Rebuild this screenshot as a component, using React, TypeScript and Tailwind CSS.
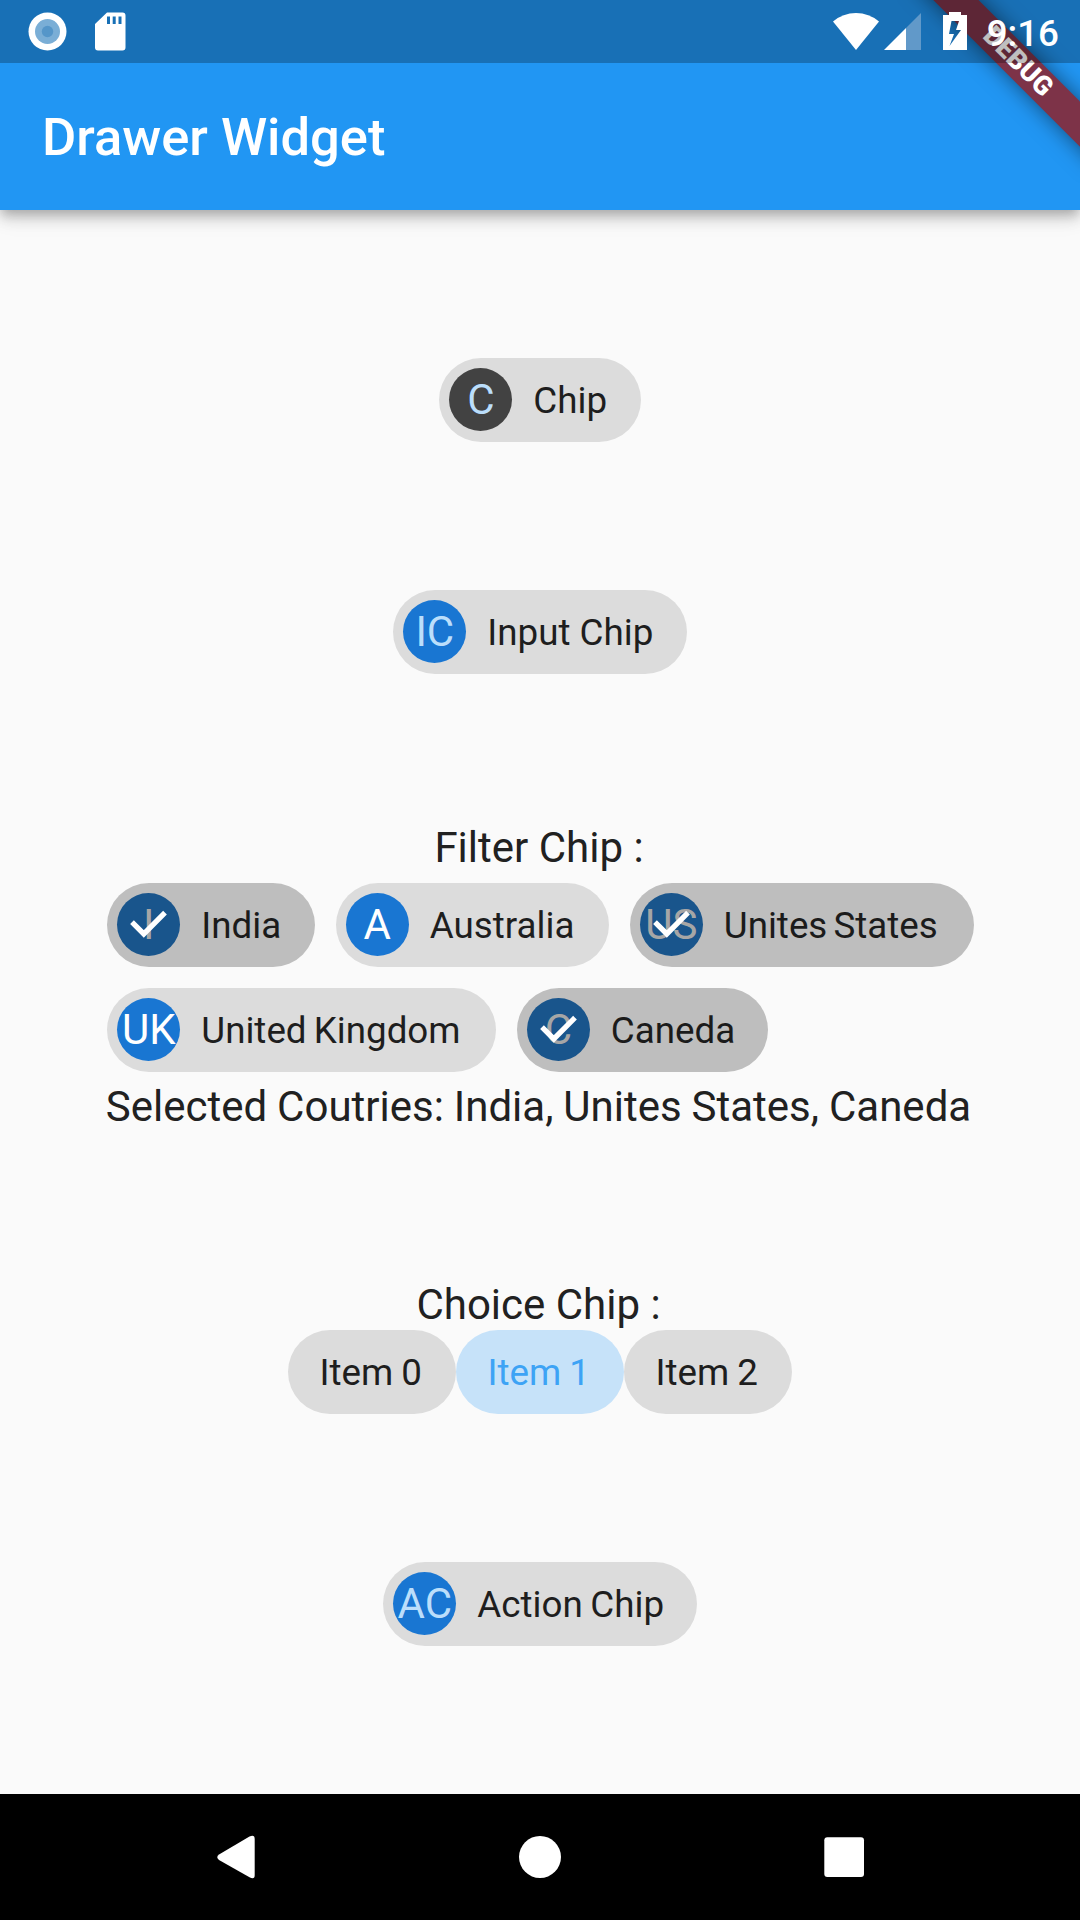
import type { ReactNode } from "react";

function Check() {
  return (
    <svg className="absolute inset-0" width="63" height="63" viewBox="0 0 63 63" fill="none">
      <path d="M15 29.1L26.8 40.95L48 19.7" stroke="#fff" strokeWidth="5.25" />
    </svg>
  );
}

function Avatar({ text, tone, checked }: { text: string; tone: string; checked?: boolean }) {
  return (
    <span className={`relative mb-px flex size-[63px] shrink-0 items-center justify-center rounded-full text-[42px] leading-[49px] ${tone}`}>
      {text}
      {checked && <Check />}
    </span>
  );
}

function Chip({ className, avatar, children }: { className: string; avatar?: ReactNode; children: ReactNode }) {
  return (
    <div
      className={`flex h-[84px] shrink-0 items-center rounded-full text-[36.75px] leading-[43px] whitespace-nowrap ${
        avatar ? "gap-[21px] pl-[10.3px]" : "pl-[31.5px]"
      } ${className}`}
    >
      {avatar}
      <span>{children}</span>
    </div>
  );
}

const PLAIN = "bg-[#dcdcdc] text-[#1e1e1e]";
const SELECTED = "bg-[#bebebe] text-[#1b1b1b]";

const countries = [
  { short: "I", name: "India", width: "w-[207.5px]", selected: true },
  { short: "A", name: "Australia", width: "w-[273px]", selected: false },
  { short: "US", name: "Unites States", width: "w-[344px] [word-spacing:-3px]", selected: true },
  { short: "UK", name: "United Kingdom", width: "w-[388.5px] [word-spacing:-2px]", selected: false },
  { short: "C", name: "Caneda", width: "w-[251.5px]", selected: true },
];

function StatusBar() {
  return (
    <div className="relative z-20 flex h-[63px] shrink-0 bg-black/25">
      <svg width="1080" height="63" viewBox="0 0 1080 63">
        <circle cx="47.5" cy="31.5" r="19" fill="#fff" />
        <circle cx="47.5" cy="31.5" r="12.5" fill="#7aaed6" />
        <circle cx="47.5" cy="31.5" r="5.7" fill="#5596c9" />
        <path
          fill="#fff"
          fillRule="evenodd"
          d="M107 12.5h15.500a3 3 0 0 1 3 3v32a3 3 0 0 1-3 3h-24.500a3 3 0 0 1-3-3v-23.500zM107 16.500v7.500h3v-7.500zM112.700 16.500v7.500h3v-7.500zM118.500 16.500v7.500h3v-7.500z"
        />
        <path fill="#fff" d="M856 50L833 21.500Q843 13 856 13T879 21.500z" />
        <path fill="#6199c9" d="M906 28L921 13V50H906z" />
        <path fill="#fff" d="M884 50L906 28V50z" />
        <path
          fill="#fff"
          fillRule="evenodd"
          d="M949 12h12v3h6v35h-24V15h6zM951.500 21L949 34h5l-4.500 12L961 30h-5l3-9z"
        />
      </svg>
      <span className="absolute top-[12px] right-[21px] text-[36.75px] leading-[43px] font-medium text-white">9:16</span>
    </div>
  );
}

function DebugBanner() {
  return (
    <div className="absolute top-0 right-0 z-10 size-[200px] overflow-hidden">
      <div className="absolute top-[46px] left-[8px] flex h-[31.5px] w-[260px] rotate-45 items-center justify-center bg-[#7d3348] text-[26.8px] leading-none font-black text-white shadow-[0_0_21px_rgba(0,0,0,0.5)]">
        DEBUG
      </div>
    </div>
  );
}

export default function App() {
  return (
    <div className="relative flex h-[1920px] w-[1080px] flex-col overflow-hidden bg-[#fafafa] font-['Roboto',sans-serif]">
      <DebugBanner />
      <header className="flex h-[210px] shrink-0 flex-col bg-[#2196f3] shadow-[0_5px_10px_-2px_rgba(0,0,0,0.2),0_10px_13px_rgba(0,0,0,0.12),0_3px_26px_rgba(0,0,0,0.1)]">
        <StatusBar />
        <div className="flex flex-1 items-center pt-px pl-[42px]">
          <h1 className="text-[52.5px] leading-[62px] font-medium text-white">Drawer Widget</h1>
        </div>
      </header>

      <main className="flex flex-1 flex-col items-center text-[42px] leading-[49px] text-[#212121]">
        <Chip className={`mt-[148px] w-[202px] ${PLAIN}`} avatar={<Avatar text="C" tone="bg-[#424242] text-[#bbdefb]" />}>
          Chip
        </Chip>
        <Chip className={`mt-[148px] w-[294px] ${PLAIN}`} avatar={<Avatar text="IC" tone="bg-[#1976d2] text-[#bbdefb]" />}>
          Input Chip
        </Chip>

        <section className="mt-[149px] flex flex-col items-center">
          <h2 className="pr-[2px]">Filter Chip :</h2>
          <div className="mt-[11px] flex w-[868px] flex-wrap gap-[21px] pl-px">
            {countries.map((c) => (
              <Chip
                key={c.short}
                className={`${c.width} ${c.selected ? SELECTED : PLAIN}`}
                avatar={
                  <Avatar
                    text={c.short}
                    checked={c.selected}
                    tone={c.selected ? "bg-[#19558c] text-[#a6a6a6]" : "bg-[#1976d2] text-white"}
                  />
                }
              >
                {c.name}
              </Chip>
            ))}
          </div>
          <p className="mt-[10px] pr-[3px] [word-spacing:-0.5px] whitespace-nowrap">
            Selected Coutries: India, Unites States, Caneda
          </p>
        </section>

        <section className="mt-[149px] flex flex-col items-center">
          <h2 className="pr-[3px]">Choice Chip :</h2>
          <div className="mt-px flex [word-spacing:-1px]">
            <Chip className={`w-[168px] ${PLAIN}`}>Item 0</Chip>
            <Chip className="w-[168px] bg-[#c6e2f9] text-[#3da3f5]">Item 1</Chip>
            <Chip className={`w-[168px] ${PLAIN}`}>Item 2</Chip>
          </div>
        </section>

        <Chip
          className={`mt-[148px] w-[314px] [word-spacing:-1.5px] ${PLAIN}`}
          avatar={<Avatar text="AC" tone="bg-[#1976d2] text-[#bbdefb]" />}
        >
          Action Chip
        </Chip>
      </main>

      <nav className="flex h-[126px] shrink-0 bg-black">
        <svg width="1080" height="126" viewBox="0 0 1080 126" fill="#fff">
          <path d="M249.500 42.500Q254.700 40 254.700 45V81Q254.700 86 249.500 83.200L219 66Q215.500 63 219 60.500z" />
          <circle cx="540" cy="63" r="21" />
          <rect x="824.300" y="43.200" width="39.700" height="39.700" rx="3" />
        </svg>
      </nav>
    </div>
  );
}
